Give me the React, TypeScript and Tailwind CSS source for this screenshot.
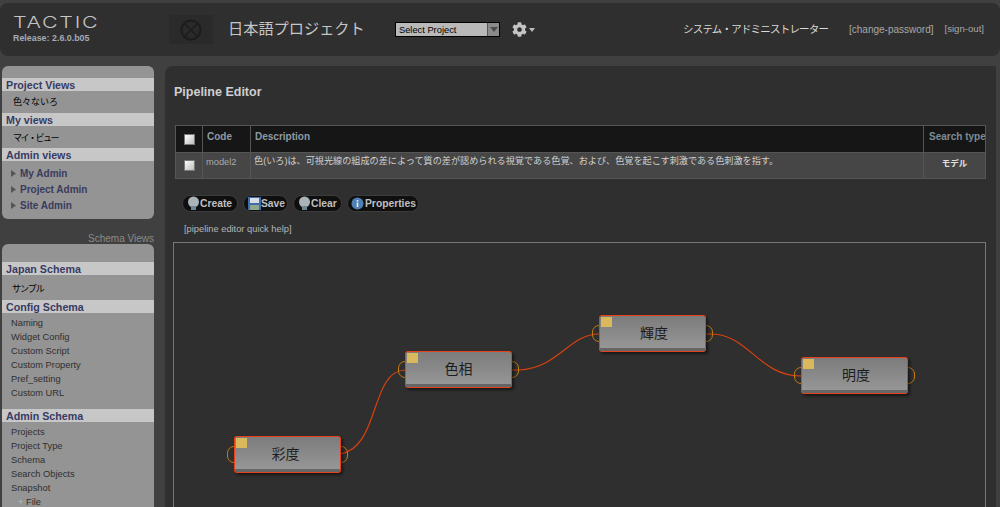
import type { ReactNode } from 'react';
import { FaCog } from 'react-icons/fa';

const font = "font-['Liberation_Sans','Noto_Sans_CJK_JP',sans-serif]";

function SectionHead({ children }: { children: ReactNode }) {
  return <div className="h-[13px] bg-[#c7c7c7] pl-[4px] text-[10.7px] leading-[15px] font-bold text-[#373b63]">{children}</div>;
}

function Arrow() {
  return (
    <svg width="5" height="7" viewBox="0 0 5 7" className="mr-[4px]">
      <path d="M0 0 L5 3.5 L0 7 Z" fill="#555" />
    </svg>
  );
}

function AdminRow({ label }: { label: string }) {
  return (
    <div className="flex h-[16px] items-center pl-[9px] text-[10px] font-bold text-[#393b5c]">
      <Arrow />
      {label}
    </div>
  );
}

function SchemaRows({ rows }: { rows: string[] }) {
  return (
    <div className="pt-[3px]">
      {rows.map((r) => (
        <div key={r} className="h-[14px] pl-[9px] text-[9.3px] leading-[14px] text-[#2f2f2f]">{r}</div>
      ))}
    </div>
  );
}

function Sidebar() {
  return (
    <div className="flex w-[152px] shrink-0 flex-col">
      <div className="h-[153px] overflow-hidden rounded-[6px] bg-[#949494] pt-[12px]">
        <SectionHead>Project Views</SectionHead>
        <div className="h-[22px] pl-[11px] text-[9px] leading-[23px] text-black">色々ないろ</div>
        <SectionHead>My views</SectionHead>
        <div className="h-[22px] pl-[11px] text-[9px] leading-[24px] tracking-[-1.5px] text-black">マイ・ビュー</div>
        <SectionHead>Admin views</SectionHead>
        <div className="pt-[4px]">
          <AdminRow label="My Admin" />
          <AdminRow label="Project Admin" />
          <AdminRow label="Site Admin" />
        </div>
      </div>
      <div className="mt-[13px] h-[12px] text-right text-[10px] leading-[14px] text-[#8b8b8b]">Schema Views</div>
      <div className="flex-1 overflow-hidden rounded-t-[6px] bg-[#949494] pt-[18px]">
        <SectionHead>Japan Schema</SectionHead>
        <div className="h-[25px] pl-[10px] text-[9px] leading-[28px] tracking-[-1px] text-black">サンプル</div>
        <SectionHead>Config Schema</SectionHead>
        <SchemaRows rows={['Naming', 'Widget Config', 'Custom Script', 'Custom Property', 'Pref_setting', 'Custom URL']} />
        <div className="h-[9px]" />
        <SectionHead>Admin Schema</SectionHead>
        <SchemaRows rows={['Projects', 'Project Type', 'Schema', 'Search Objects', 'Snapshot']} />
        <div className="h-[14px] pl-[16px] text-[9.3px] leading-[14px] text-[#2f2f2f]">
          <span className="text-[#bbb]">+</span> File
        </div>
      </div>
    </div>
  );
}

function Check() {
  return <div className="h-[11px] w-[11px] border border-[#777] bg-gradient-to-br from-white to-[#bdbdbd]" />;
}

function PipeTable() {
  return (
    <div className="grid h-[54px] w-[811px] grid-cols-[26px_47px_672px_1fr] grid-rows-[26px_1fr] gap-px bg-[#555] p-px text-[10px]">
      <div className="flex items-center justify-center bg-[#161616]"><Check /></div>
      <div className="bg-[#161616] pl-[4px] pt-[3px] font-bold text-[#8e9aa3]">Code</div>
      <div className="bg-[#161616] pl-[4px] pt-[3px] font-bold text-[#8e9aa3]">Description</div>
      <div className="overflow-hidden whitespace-nowrap bg-[#161616] pl-[5px] pt-[3px] font-bold text-[#7d8b96]">Search type</div>
      <div className="flex items-center justify-center bg-[#464646]"><Check /></div>
      <div className="bg-[#464646] pl-[3px] pt-[3px] text-[9.3px] text-[#a9a9a9]">model2</div>
      <div className="whitespace-nowrap bg-[#464646] pl-[3px] pt-[2px] text-[9.15px] text-[#d0d0d0]">色(いろ)は、可視光線の組成の差によって質の差が認められる視覚である色覚、および、色覚を起こす刺激である色刺激を指す。</div>
      <div className="bg-[#464646] pt-[4px] text-center text-[8.5px] font-bold text-[#e2e2e2]">モデル</div>
    </div>
  );
}

function Bulb() {
  return (
    <svg width="15" height="15" viewBox="0 0 15 15" className="-mr-[1px]">
      <circle cx="7.5" cy="6" r="5.5" fill="#a9b3b8" />
      <rect x="5" y="10" width="5" height="4" fill="#6f8794" />
    </svg>
  );
}

function Floppy() {
  return (
    <svg width="15" height="15" viewBox="0 0 15 15" className="-mr-[1px]">
      <rect x="1" y="1" width="13" height="13" fill="#3f6cab" />
      <rect x="3" y="2" width="9" height="5" fill="#d8dde6" />
      <rect x="3" y="9" width="9" height="5" fill="#8fa68f" />
    </svg>
  );
}

function Info() {
  return (
    <svg width="13" height="13" viewBox="0 0 13 13" className="mr-[1px]">
      <circle cx="6.5" cy="6.5" r="6" fill="#4f7fb5" />
      <rect x="5.7" y="5.5" width="1.6" height="4.5" fill="#e8eef5" />
      <rect x="5.7" y="3" width="1.6" height="1.6" fill="#e8eef5" />
    </svg>
  );
}

function ToolButton({ icon, label, w }: { icon: ReactNode; label: string; w: string }) {
  return (
    <div className={`flex h-[17px] items-center rounded-full border border-[#3c3c3c] bg-[#0f0f0f] pl-[3px] text-[10.3px] font-bold text-[#c0c0c0] ${w}`}>
      {icon}
      <span>{label}</span>
    </div>
  );
}

function PipeNode({ label, className, labelPad }: { label: string; className: string; labelPad: string }) {
  return (
    <div className={`absolute h-[37px] w-[107px] ${className}`}>
      <div className="absolute -left-[7px] top-[10px] h-[17px] w-[14px] rounded-full border border-[#c47a10]" />
      <div className="absolute -right-[7px] top-[10px] h-[17px] w-[14px] rounded-full border border-[#c47a10]" />
      <div className="relative h-full rounded-[3px] bg-[#e8401a] p-px shadow-[2px_2px_3px_rgba(0,0,0,0.5)]">
        <div className={`relative flex h-full items-center justify-center rounded-[2px] bg-gradient-to-b from-[#7c7c7c] via-[#8a8a8a] to-[#999] text-[14px] text-[#1d1d1d] ${labelPad}`}>
          <div className="absolute left-[1px] top-[1px] h-[10px] w-[11px] bg-[#d9b95c]" />
          <div className="absolute inset-x-0 bottom-0 h-[3px] bg-[#666]" />
          <span className="relative">{label}</span>
        </div>
      </div>
    </div>
  );
}

function PipelineCanvas() {
  return (
    <div className="relative h-[300px] w-[813px] border border-[#777] bg-[#2f2f2f]">
      <svg width="813" height="300" viewBox="0 0 813 300" className="absolute left-0 top-0" fill="none" stroke="#d8400f" strokeWidth="1.2">
        <path d="M160 211 L166 211 C206 205 196 128 231 127 L241 127" />
        <path d="M330 127 L345 127 C385 125 395 91 425 91 L436 91" />
        <path d="M524 91 L538 91 C575 92 585 133 627 133" />
      </svg>
      <PipeNode label="彩度" className="left-[60px] top-[193px]" labelPad="pr-[4px]" />
      <PipeNode label="色相" className="left-[231px] top-[108px]" labelPad="" />
      <PipeNode label="輝度" className="left-[425px] top-[72px]" labelPad="pl-[3px]" />
      <PipeNode label="明度" className="left-[627px] top-[114px]" labelPad="pl-[3px]" />
    </div>
  );
}

function Header() {
  return (
    <div className="flex h-[53px] items-center rounded-[8px] bg-[#2f2f2f] pr-[4px]">
      <div className="w-[169px] -translate-y-[1px] pl-[13px]">
        <div className="origin-left scale-x-[1.3] text-[16.5px] font-light leading-[17px] tracking-[1.3px] text-[#c4c4c4] font-['Inter',sans-serif]">TACTIC</div>
        <div className="mt-[2px] text-[8.9px] font-bold leading-[11px] text-[#a3abb3]">Release: 2.6.0.b05</div>
      </div>
      <div className="flex h-[29px] w-[44px] items-center justify-center bg-[#2a2a2a]">
        <svg width="22" height="22" viewBox="0 0 22 22" fill="none" stroke="#1c1c1c" strokeWidth="2">
          <circle cx="11" cy="11" r="9.5" />
          <path d="M5 5 L17 17 M17 5 L5 17" strokeWidth="1.5" />
        </svg>
      </div>
      <div className="ml-[15px] w-[167px] text-[15.2px] text-[#c6c6c6]">日本語プロジェクト</div>
      <div className="flex h-[15px] w-[105px] border border-black bg-[#b9b9b9]">
        <div className="flex-1 pl-[3px] text-[9.3px] leading-[14px] text-black">Select Project</div>
        <div className="flex w-[12px] items-center justify-center border-l border-[#555] bg-[#8b8b8b]">
          <div className="h-0 w-0 border-x-[4px] border-t-[5px] border-x-transparent border-t-[#4c4c4c]" />
        </div>
      </div>
      <FaCog className="ml-[12px] text-[#c4c4c4]" size={15} />
      <div className="ml-[2px] h-0 w-0 border-x-[3px] border-t-[4px] border-x-transparent border-t-[#bbb]" />
      <div className="ml-[148px] w-[166px] whitespace-nowrap text-[10.5px] tracking-[-0.8px] text-[#d8d8d8]">システム・アドミニストレーター</div>
      <div className="whitespace-nowrap text-[10px] text-[#a8a8a8]">[change-password]</div>
      <div className="ml-[11px] whitespace-nowrap text-[9.6px] text-[#a8a8a8]">[sign-out]</div>
    </div>
  );
}

export default function App() {
  return (
    <div className={`h-[507px] w-[1000px] overflow-hidden bg-[#404040] pt-[3px] ${font}`}>
      <Header />
      <div className="mt-[10px] flex h-[441px] pl-[2px]">
        <Sidebar />
        <div className="ml-[11px] w-[831px] rounded-tl-[8px] bg-[#2f2f2f] pl-[8px]">
          <div className="h-[59px] pl-[1px] pt-[19px] text-[12.5px] font-bold leading-[15px] text-[#cfcfcf]">Pipeline Editor</div>
          <div className="pl-[2px]"><PipeTable /></div>
          <div className="mt-[16px] flex gap-[5px] pl-[9px]">
            <ToolButton icon={<Bulb />} label="Create" w="w-[56px]" />
            <ToolButton icon={<Floppy />} label="Save" w="w-[45px]" />
            <ToolButton icon={<Bulb />} label="Clear" w="w-[49px]" />
            <ToolButton icon={<Info />} label="Properties" w="w-[72px]" />
          </div>
          <div className="h-[30px] pl-[11px] pt-[11px] text-[9.3px] leading-[12px] text-[#b5b5b5]">[pipeline editor quick help]</div>
          <PipelineCanvas />
        </div>
      </div>
    </div>
  );
}
